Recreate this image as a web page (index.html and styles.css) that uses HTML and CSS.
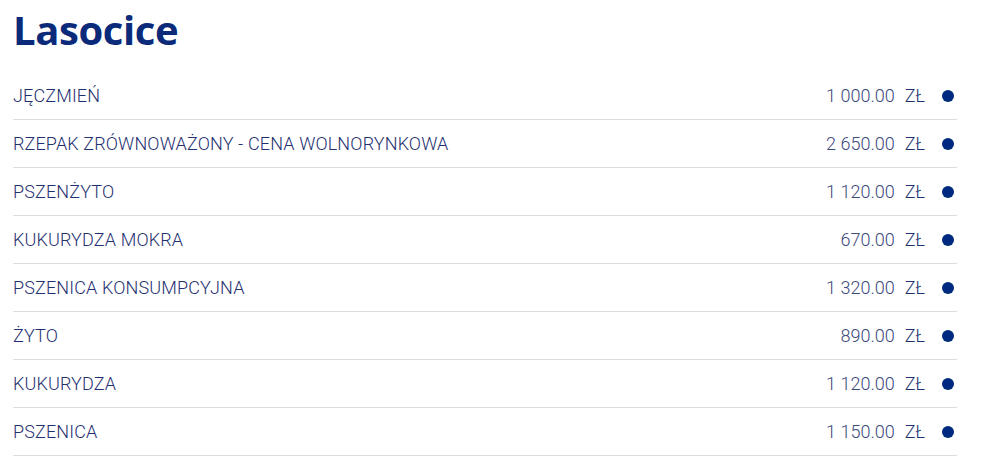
FILE: index.html
```html
<!DOCTYPE html>
<html lang="pl">
<head>
<meta charset="utf-8">
<link rel="stylesheet" href="styles.css">
</head>
<body>
<div class="page">
  <h1 class="title">Lasocice</h1>
  <ul class="prices">
    <li class="row"><span class="name">JĘCZMIEŃ</span><span class="amount">1 000.00</span><span class="cur">ZŁ</span><span class="dot"></span></li>
    <li class="row"><span class="name">RZEPAK ZRÓWNOWAŻONY - CENA WOLNORYNKOWA</span><span class="amount">2 650.00</span><span class="cur">ZŁ</span><span class="dot"></span></li>
    <li class="row"><span class="name">PSZENŻYTO</span><span class="amount">1 120.00</span><span class="cur">ZŁ</span><span class="dot"></span></li>
    <li class="row"><span class="name">KUKURYDZA MOKRA</span><span class="amount">670.00</span><span class="cur">ZŁ</span><span class="dot"></span></li>
    <li class="row"><span class="name">PSZENICA KONSUMPCYJNA</span><span class="amount">1 320.00</span><span class="cur">ZŁ</span><span class="dot"></span></li>
    <li class="row"><span class="name">ŻYTO</span><span class="amount">890.00</span><span class="cur">ZŁ</span><span class="dot"></span></li>
    <li class="row"><span class="name">KUKURYDZA</span><span class="amount">1 120.00</span><span class="cur">ZŁ</span><span class="dot"></span></li>
    <li class="row"><span class="name">PSZENICA</span><span class="amount">1 150.00</span><span class="cur">ZŁ</span><span class="dot"></span></li>
  </ul>
</div>
</body>
</html>
```
FILE: styles.css
```css
html, body {
  margin: 0;
  padding: 0;
  background: #fff;
}
.page {
  padding: 0 35px 0 13px;
  font-family: Roboto, "Liberation Sans", sans-serif;
}
.title {
  margin: 0;
  height: 72px;
  padding-top: 6px;
  box-sizing: border-box;
  font-family: "Open Sans", sans-serif;
  font-weight: 700;
  font-size: 40px;
  line-height: 48px;
  color: #0b2a7a;
  letter-spacing: -0.4px;
}
.prices {
  list-style: none;
  margin: 0;
  padding: 0;
}
.row {
  display: flex;
  align-items: center;
  box-sizing: border-box;
  height: 48px;
  border-bottom: 1px solid #dcdcdc;
  font-size: 18px;
  font-weight: 300;
  color: #1f3170;
}
.name {
  flex: 1;
  letter-spacing: 0.14px;
}
.amount {
  color: #3b4a7c;
}
.cur {
  margin-left: 10px;
  color: #1f3170;
}
.dot {
  width: 12px;
  height: 12px;
  border-radius: 50%;
  background: #002a7f;
  margin-left: 17px;
  margin-right: 3px;
}
```
